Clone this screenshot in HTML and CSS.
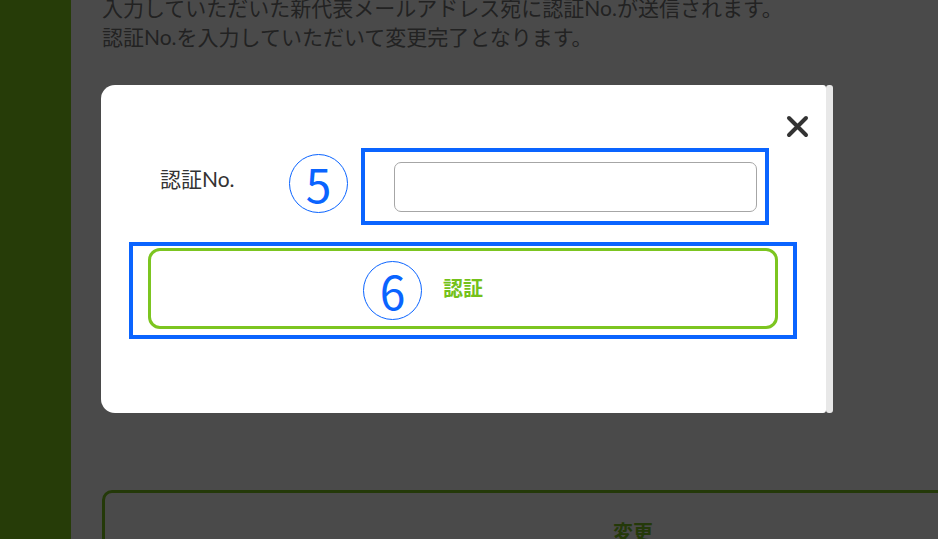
FILE: index.html
```html
<!DOCTYPE html>
<html lang="ja">
<head>
    <meta charset="UTF-8">
    <meta name="viewport" content="width=device-width, initial-scale=1.0">
    <title>代表メールアドレス変更</title>
    <link rel="stylesheet" href="styles.css">
</head>
<body>
    <div class="page">
        <aside class="sidebar"></aside>
        <main class="main">
            <p class="lead">
                入力していただいた新代表メールアドレス宛に認証No.が送信されます。<br>
                認証No.を入力していただいて変更完了となります。
            </p>
            <button class="change-btn">変更</button>
        </main>
    </div>

    <div class="overlay"></div>

    <div class="modal">
        <div class="modal-body">
            <button class="close-btn" aria-label="閉じる">
                <svg width="23" height="23" viewBox="0 0 23 23">
                    <path d="M3 3 L20 20 M20 3 L3 20" stroke="#333" stroke-width="4" stroke-linecap="round" fill="none"/>
                </svg>
            </button>

            <div class="code-row">
                <label for="authCode" class="code-label">認証No.</label>
                <span class="mark mark-row">5</span>
                <div class="note-box note-input">
                    <input type="text" id="authCode" class="code-input">
                </div>
            </div>

            <div class="note-box note-submit">
                <button class="submit-btn">
                    <span class="submit-text">
                        <span class="mark mark-btn">6</span>
                        認証
                    </span>
                </button>
            </div>
        </div>
        <div class="modal-scroll"></div>
    </div>
</body>
</html>
```

FILE: styles.css
```css
* {
    box-sizing: border-box;
    margin: 0;
    padding: 0;
}

html, body {
    height: 100%;
    overflow: hidden;
}

body {
    background: #fff;
    font-family: 'Lato', 'Noto Sans CJK JP', sans-serif;
    color: #777;
}

.page {
    display: flex;
    min-height: 100%;
}

.sidebar {
    width: 71px;
    flex-shrink: 0;
    background: #84cf1c;
}

.main {
    padding-left: 31px;
}

.lead {
    margin-top: -7px;
    font-size: 21px;
    line-height: 29px;
    white-space: nowrap;
}

.change-btn {
    display: block;
    width: 1062px;
    height: 82px;
    margin-top: 439px;
    background: #fff;
    border: 3px solid #7cc520;
    border-radius: 10px;
    color: #7cc520;
    font-family: 'Noto Sans CJK JP', sans-serif;
    font-size: 20px;
    font-weight: 700;
}

/* dim layer behind the dialog */
.overlay {
    position: fixed;
    inset: 0;
    background: rgba(0, 0, 0, 0.71);
}

.modal {
    position: fixed;
    left: 101px;
    top: 85px;
    width: 732px;
    height: 328px;
    display: flex;
}

.modal-body {
    position: relative;
    flex: 1;
    background: #fff;
    border-radius: 14px 3px 3px 14px;
    padding-top: 63px;
}

.modal-scroll {
    width: 7px;
    background: #e8e8e8;
    border-radius: 3px;
}

.close-btn {
    position: absolute;
    top: 30px;
    right: 17px;
    width: 23px;
    height: 23px;
    border: none;
    background: none;
    display: flex;
}

.code-row {
    display: flex;
    align-items: center;
    padding-left: 59px;
}

.code-label {
    width: 129px;
    margin-bottom: 17px;
    font-size: 21px;
    color: #333;
}

/* numbered annotation circles */
.mark {
    display: flex;
    align-items: center;
    justify-content: center;
    width: 59px;
    height: 59px;
    border: 1.5px solid #0a64ff;
    border-radius: 50%;
    color: #0a64ff;
    font-family: 'Noto Sans CJK JP', sans-serif;
    font-size: 46px;
    font-weight: 400;
    line-height: 1;
}

.mark-row {
    margin-right: 13px;
    margin-bottom: 7px;
}

.mark-btn {
    position: absolute;
    left: -80px;
    top: 50%;
    margin-top: -27px;
}

.note-box {
    border: 4px solid #0a64ff;
}

.note-input {
    width: 408px;
    height: 77px;
    padding: 10px 8px 9px 29px;
}

.code-input {
    display: block;
    width: 100%;
    height: 100%;
    border: 1px solid #a6a6a6;
    border-radius: 7px;
    font-size: 18px;
    padding: 0 12px;
    outline: none;
}

.note-submit {
    width: 668px;
    height: 97px;
    margin: 17px 0 0 28px;
    padding: 2px 15px 6px;
}

.submit-btn {
    display: flex;
    align-items: center;
    justify-content: center;
    width: 100%;
    height: 100%;
    background: #fff;
    border: 3px solid #7cc520;
    border-radius: 12px;
}

.submit-text {
    position: relative;
    color: #74c11a;
    font-family: 'Noto Sans CJK JP', sans-serif;
    font-size: 20px;
    font-weight: 700;
    line-height: 1;
    margin-top: -2px;
}
```
